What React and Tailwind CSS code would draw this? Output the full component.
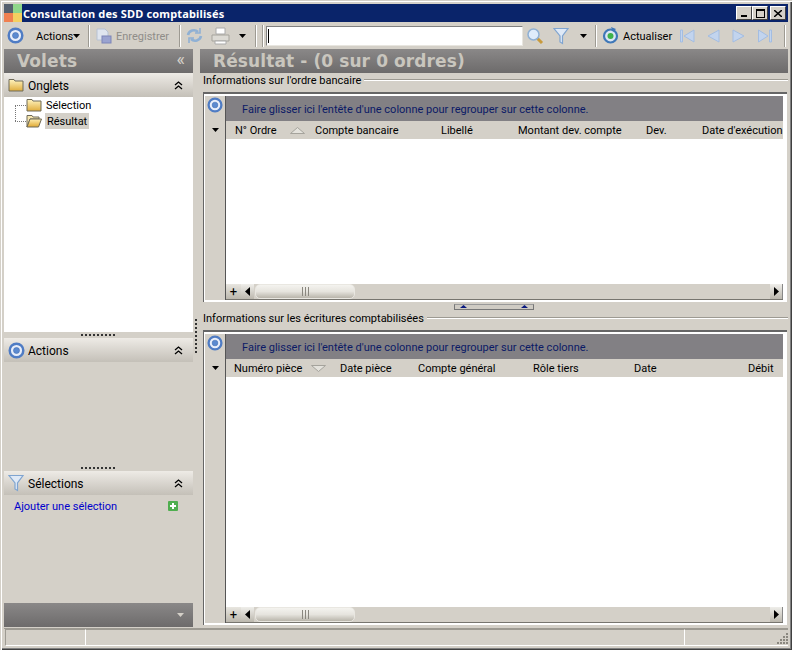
import React from "react";

const Target = ({ s = 18 }) => (
  <svg width={s} height={s} viewBox="0 0 18 18" className="shrink-0">
    <circle cx="9" cy="9" r="7.200" fill="#e8eefa" stroke="#4f7cc4" strokeWidth="2.6" />
    <circle cx="9" cy="9" r="3.200" fill="#5b8ad0" stroke="#3f69ad" strokeWidth="0.6" />
  </svg>
);
const Caret = ({ color = "#000" }) => (
  <svg width="7" height="4" viewBox="0 0 7 4" className="shrink-0"><path d="M0 0h7L3.500 4z" fill={color} /></svg>
);
const Chevrons = () => (
  <svg width="9" height="9" viewBox="0 0 9 9" className="shrink-0" fill="none" stroke="#000" strokeWidth="1.3">
    <path d="M1 4l3.500-3L8 4M1 8l3.500-3L8 8" />
  </svg>
);
const FolderClosed = () => (
  <svg width="16" height="14" viewBox="0 0 16 14" className="shrink-0">
    <defs><linearGradient id="fc" x1="0" y1="0" x2="0" y2="1"><stop offset="0" stopColor="#fff4c0" /><stop offset="1" stopColor="#e0ad3c" /></linearGradient></defs>
    <path d="M1 3V1.500h5L7 3h8v10H1z" fill="url(#fc)" stroke="#6f6a58" strokeWidth="1" />
  </svg>
);
const FolderOpen = () => (
  <svg width="16" height="14" viewBox="0 0 16 14" className="shrink-0">
    <defs><linearGradient id="fo" x1="0" y1="0" x2="0" y2="1"><stop offset="0" stopColor="#ffeeb0" /><stop offset="1" stopColor="#e0a830" /></linearGradient></defs>
    <path d="M1 13V1.500h5L7 3h6v2H4z" fill="#f6e6b0" stroke="#6f6a58" />
    <path d="M1 13l3-8h11.500l-3 8z" fill="url(#fo)" stroke="#6f6a58" />
  </svg>
);
const Funnel = () => (
  <svg width="16" height="18" viewBox="0 0 16 18" className="shrink-0">
    <path d="M1 1.500h14L9.500 9v7.500L7 15V9z" fill="#dfe9f6" stroke="#7fa4d0" strokeWidth="1.200" />
  </svg>
);
const Nav = ({ d }) => (
  <svg width="16" height="16" viewBox="0 0 16 16" className="shrink-0"><path d={d} fill="#c2d4ee" stroke="#a3bde2" /></svg>
);
const Sep = () => <div className="w-[2px] h-[22px] border-l border-[#9d9a92] bg-white shrink-0" />;

const Scroll = () => (
  <div className="h-[16px] flex bg-[#d4d0c8] shrink-0 items-stretch border-b border-[#77756f]">
    <div className="w-[15px] flex items-center justify-center text-[13px] leading-none text-black bg-gradient-to-b from-[#e8e6e0] to-[#bcb8ae]">+</div>
    <div className="w-[13px] flex items-center justify-center bg-gradient-to-b from-[#efeeea] to-[#bcb8ae]">
      <svg width="5" height="9" viewBox="0 0 5 9"><path d="M5 0v9L0 4.500z" fill="#000" /></svg>
    </div>
    <div className="w-[100px] ml-px rounded-[5px] flex items-center justify-center border border-[#e9e7e1] bg-gradient-to-b from-[#f4f3ef] via-[#e6e4de] to-[#b9b5ab]">
      <div className="w-[7px] h-[9px] border-x border-[#8a877f] flex justify-center"><div className="w-px h-full bg-[#8a877f]" /></div>
    </div>
    <div className="flex-1" />
    <div className="w-[13px] flex items-center justify-center bg-gradient-to-b from-[#efeeea] to-[#bcb8ae] border-r border-[#888]">
      <svg width="5" height="9" viewBox="0 0 5 9"><path d="M0 0v9l5-4.500z" fill="#000" /></svg>
    </div>
  </div>
);

const Grid = ({ className, cols, pad, sort }) => (
  <div className={`border-t-2 border-l border-[#666] bg-white pl-px pt-[2px] pr-[4px] pb-[2px] flex ${className}`}>
    <div className="w-[21px] shrink-0 bg-[#d4d0c8] border-r border-[#555] flex flex-col items-center">
      <div className="h-[25px] pt-px pr-px flex items-start justify-center"><Target s={16} /></div>
      <div className="h-[18px] flex items-center justify-center"><Caret /></div>
    </div>
    <div className="flex-1 flex flex-col min-w-0">
      <div className="h-[25px] bg-[#828084] flex items-center pl-[16px] pt-[2px] text-[#0b1a66] shrink-0">
        Faire glisser ici l'entête d'une colonne pour regrouper sur cette colonne.
      </div>
      <div style={{ paddingLeft: pad }} className="h-[18px] bg-[#d4d0c8] shrink-0 flex items-center relative overflow-hidden whitespace-nowrap text-black">
        {cols.map(([t, w]) => (
          <div key={t} style={{ width: w }} className="shrink-0 flex items-center">{t}</div>
        ))}
        {sort}
      </div>
      <div className="flex-1 bg-white" />
      <Scroll />
    </div>
  </div>
);

const PanelHeader = ({ icon, label }) => (
  <div className="h-[24px] shrink-0 flex items-center bg-gradient-to-b from-[#eeebe6] to-[#c4c0b8] pr-[10px] text-[12px] text-black">
    <div className="w-[24px] flex justify-center shrink-0">{icon}</div>
    <span className="flex-1 pt-px">{label}</span>
    <Chevrons />
  </div>
);

const Dots = () => (
  <div className="h-[6px] shrink-0 flex items-center justify-center pl-px">
    <div className="w-[36px] h-[2px] bg-[repeating-linear-gradient(90deg,#333_0_2px,transparent_2px_4px)]" />
  </div>
);

const GroupLabel = ({ children }) => (
  <div className="h-[14px] shrink-0 flex items-center gap-[3px] pl-[3px]">
    <span className="text-black whitespace-nowrap">{children}</span>
    <div className="flex-1 h-[2px] border-t border-[#9d9a92] bg-white" />
  </div>
);

export default function App() {
  return (
    <div className="w-[792px] h-[650px] bg-[#d4d0c8] p-[4px] relative overflow-hidden flex flex-col text-[11px] leading-none font-['Roboto','Noto_Sans',sans-serif] text-black shadow-[inset_1px_1px_0_#d4d0c8,inset_2px_2px_0_#ffffff,inset_-1px_-1px_0_#404040,inset_-2px_-2px_0_#808080]">
      <div className="h-[18px] shrink-0 bg-[#0a246a] flex items-center">
        <svg width="18" height="18" viewBox="0 0 18 18" className="shrink-0">
          <rect width="9" height="9" fill="#55606e" /><rect x="9" width="9" height="9" fill="#8fd68a" />
          <rect y="9" width="9" height="9" fill="#f08050" /><rect x="9" y="9" width="9" height="9" fill="#f4d060" />
        </svg>
        <span className="ml-[1px] text-white font-bold text-[11px] font-['Noto_Sans',sans-serif] flex-1 tracking-[0.15px]">Consultation des SDD comptabilisés</span>
        <div className="flex gap-0 mr-[2px]">
          {["min", "max"].map((k) => (
            <div key={k} className="w-[16px] h-[14px] bg-[#d4d0c8] border border-t-white border-l-white border-r-[#404040] border-b-[#404040] flex items-center justify-center">
              {k === "min" ? <div className="w-[6px] h-[2px] bg-black mt-[6px] -ml-[1px]" /> : <div className="w-[9px] h-[9px] border border-t-2 border-black" />}
            </div>
          ))}
          <div className="ml-[2px] w-[16px] h-[14px] bg-[#d4d0c8] border border-t-white border-l-white border-r-[#404040] border-b-[#404040] flex items-center justify-center">
            <svg width="8" height="7" viewBox="0 0 8 7" stroke="#000" strokeWidth="1.500"><path d="M0 0l8 7M8 0L0 7" /></svg>
          </div>
        </div>
      </div>

      <div className="h-[27px] shrink-0 flex items-center whitespace-nowrap">
        <div className="ml-[3px] w-[17px]"><Target s={17} /></div>
        <span className="ml-[12px] w-[35px] pt-[2px]">Actions</span>
        <div className="ml-[2px] mr-[8px]"><Caret /></div>
        <Sep />
        <div className="ml-[6px] w-[16px]">
          <svg width="16" height="16" viewBox="0 0 16 16"><path d="M1 1h8l3 3v8H1z" fill="#dfe5ef" stroke="#b7c2d4" /><rect x="6" y="8" width="9" height="7" fill="#9aa3d0" stroke="#7d85b8" /></svg>
        </div>
        <span className="ml-[4px] text-[#8f8d88] w-[54px] pt-[2px]">Enregistrer</span>
        <div className="ml-[9px]"><Sep /></div>
        <div className="ml-[5px] w-[17px]">
          <svg width="17" height="17" viewBox="0 0 17 17" fill="none" stroke="#8fb0d4" strokeWidth="2.600"><path d="M2 8a6 6 0 0 1 10-3M15 9a6 6 0 0 1-10 3" /><path d="M14 1v5H9M3 16v-5h5" strokeWidth="1.600" /></svg>
        </div>
        <div className="ml-[8px] w-[20px]">
          <svg width="20" height="18" viewBox="0 0 20 18"><path d="M5 1h9v6H5z" fill="#fff" stroke="#aaa" /><path d="M1 8h17v6H1z" fill="#dcdad4" stroke="#a5a39c" /><path d="M4 14h11v3H4z" fill="#fff" stroke="#aaa" /></svg>
        </div>
        <div className="ml-[8px] mr-[9px]"><Caret /></div>
        <Sep />
        <div className="ml-[5px]"><Sep /></div>
        <div className="ml-[2px] w-[257px] h-[20px] bg-white border border-[#808080] border-r-[#e8e6e0] border-b-[#e8e6e0] flex items-center pl-px">
          <div className="w-px h-[14px] bg-black" />
        </div>
        <div className="ml-[3px] w-[18px]">
          <svg width="18" height="18" viewBox="0 0 18 18"><path d="M11 11l5 5" stroke="#c89a3c" strokeWidth="3" /><circle cx="7.500" cy="7.500" r="5.500" fill="#dfecfb" stroke="#8fb0d4" strokeWidth="1.500" /></svg>
        </div>
        <div className="ml-[9px] w-[16px]"><Funnel /></div>
        <div className="ml-[11px] mr-[8px]"><Caret /></div>
        <Sep />
        <div className="ml-[5px] w-[17px]">
          <svg width="17" height="17" viewBox="0 0 17 17"><circle cx="8.500" cy="9" r="6.500" fill="#dbe6f4" stroke="#3f78b8" strokeWidth="2.200" /><circle cx="8.500" cy="9" r="3" fill="#3fb24a" /><path d="M9 0l5 2-3 3z" fill="#3f78b8" /></svg>
        </div>
        <span className="ml-[4px] w-[47px] pt-[2px]">Actualiser</span>
        <div className="ml-[9px] flex gap-[10px]">
          <Nav d="M1.500 2h2v12h-2zM15 2v12L5 8z" />
          <Nav d="M14 2v12L3 8z" />
          <Nav d="M2 2v12l11-6z" />
          <Nav d="M1.500 2v12L11 8zM12.500 2h2v12h-2z" />
        </div>
        <div className="ml-[11px]"><Sep /></div>
      </div>

      <div className="flex-1 flex min-h-0">
        <div className="w-[189px] shrink-0 flex flex-col">
          <div className="h-[24px] shrink-0 flex items-center bg-gradient-to-b from-[#8a8888] to-[#6d6b6b] pl-[13px] pr-[8px]">
            <span className="flex-1 font-['DejaVu_Sans',sans-serif] font-bold text-[17px] tracking-[0.1px] text-[#c9c6be]">Volets</span>
            <span className="text-[#d4d0c8] text-[18px] leading-none pb-[4px]">«</span>
          </div>
          <PanelHeader icon={<FolderClosed />} label="Onglets" />
          <div className="h-[235px] bg-white shrink-0 relative pl-[11px]">
            <div className="relative h-[16px] flex items-center pl-[11px]">
              <div className="absolute left-0 top-1/2 w-[11px] border-t border-dotted border-[#777]" />
              <FolderClosed />
              <span className="ml-[3px] px-[1px]">Sélection</span>
            </div>
            <div className="relative h-[16px] flex items-center pl-[11px]">
              <div className="absolute left-0 -top-[8px] h-[16px] border-l border-dotted border-[#777]" />
              <div className="absolute left-0 top-1/2 w-[11px] border-t border-dotted border-[#777]" />
              <FolderOpen />
              <span className="ml-[3px] px-[2px] h-[16px] flex items-center bg-[#d4d0c8]">Résultat</span>
            </div>
          </div>
          <Dots />
          <PanelHeader icon={<Target s={17} />} label="Actions" />
          <div className="h-[103px] shrink-0" />
          <Dots />
          <PanelHeader icon={<Funnel />} label="Sélections" />
          <div className="flex-1 min-h-0 flex items-start justify-between pl-[10px] pr-[15px] pt-[6px] text-[#0000cc]">
            <span>Ajouter une sélection</span>
            <svg width="10" height="10" viewBox="0 0 10 10" className="shrink-0"><rect width="10" height="10" rx="1" fill="#4fae4f" /><path d="M5 2v6M2 5h6" stroke="#fff" strokeWidth="2" /></svg>
          </div>
          <div className="h-[24px] shrink-0 bg-gradient-to-b from-[#8a8888] to-[#6d6b6b] flex items-center justify-end pr-[9px]"><Caret color="#d4d0c8" /></div>
        </div>

        <div className="w-[7px] shrink-0 relative">
          <div className="absolute left-[2px] top-[270px] w-[2px] h-[36px] bg-[repeating-linear-gradient(180deg,#333_0_2px,transparent_2px_4px)]" />
        </div>

        <div className="flex-1 min-w-0 flex flex-col">
          <div className="h-[24px] shrink-0 flex items-center bg-gradient-to-b from-[#8a8888] to-[#6d6b6b] pl-[13px]">
            <span className="font-['DejaVu_Sans',sans-serif] font-bold text-[17px] tracking-[0.1px] text-[#c9c6be] whitespace-nowrap">Résultat - (0 sur 0 ordres)</span>
          </div>
          <GroupLabel>Informations sur l'ordre bancaire</GroupLabel>
          <div className="h-[5px] shrink-0" />
          <Grid
            className="h-[210px] shrink-0 ml-[3px] mr-px"
            pad={9}
            cols={[["N° Ordre", 80], ["Compte bancaire", 126], ["Libellé", 77], ["Montant dev. compte", 128], ["Dev.", 56], ["Date d'exécution", 110]]}
            sort={<svg width="15" height="7" viewBox="0 0 15 7" className="absolute left-[64px] top-[6px]"><path d="M.5 6.500L7.500.5l7 6z" fill="#e4e2dc" stroke="#a5a39c" /></svg>}
          />
          <div className="h-[9px] shrink-0 flex justify-center items-center">
            <div className="w-[80px] h-[6px] border border-[#777] border-t-[#999] bg-[#cfcbc3] flex justify-between px-[5px] items-center">
              <svg width="7" height="3" viewBox="0 0 7 3"><path d="M0 3h7L3.500 0z" fill="#0a1a80" /></svg>
              <svg width="7" height="3" viewBox="0 0 7 3"><path d="M0 3h7L3.500 0z" fill="#0a1a80" /></svg>
            </div>
          </div>
          <GroupLabel>Informations sur les écritures comptabilisées</GroupLabel>
          <div className="h-[5px] shrink-0" />
          <Grid
            className="flex-1 min-h-0 ml-[3px] mr-px mb-[2px]"
            pad={8}
            cols={[["Numéro pièce", 106], ["Date pièce", 78], ["Compte général", 115], ["Rôle tiers", 101], ["Date", 114], ["Débit", 34]]}
            sort={<svg width="15" height="7" viewBox="0 0 15 7" className="absolute left-[85px] top-[6px]"><path d="M.5.5L7.500 6.500l7-6z" fill="#e4e2dc" stroke="#a5a39c" /></svg>}
          />
        </div>
      </div>

      <div className="h-[18px] shrink-0 flex border-t border-[#9d9a92] mt-px">
        <div className="w-[81px] ml-px border border-[#9d9a92] border-r-white border-b-white" />
        <div className="flex-1 border border-[#9d9a92] border-l-0 border-b-white border-r-white" />
        <div className="w-[103px] border border-[#9d9a92] border-l-0 border-r-0 border-b-white relative">
          <svg width="13" height="13" viewBox="0 0 13 13" className="absolute right-0 bottom-0">
            {[[11,1],[8,4],[11,4],[5,7],[8,7],[11,7],[2,10],[5,10],[8,10],[11,10]].map(([x,y]) => <rect key={`${x}${y}`} x={x} y={y} width="2" height="2" fill="#8a877f" />)}
          </svg>
        </div>
      </div>
    </div>
  );
}
